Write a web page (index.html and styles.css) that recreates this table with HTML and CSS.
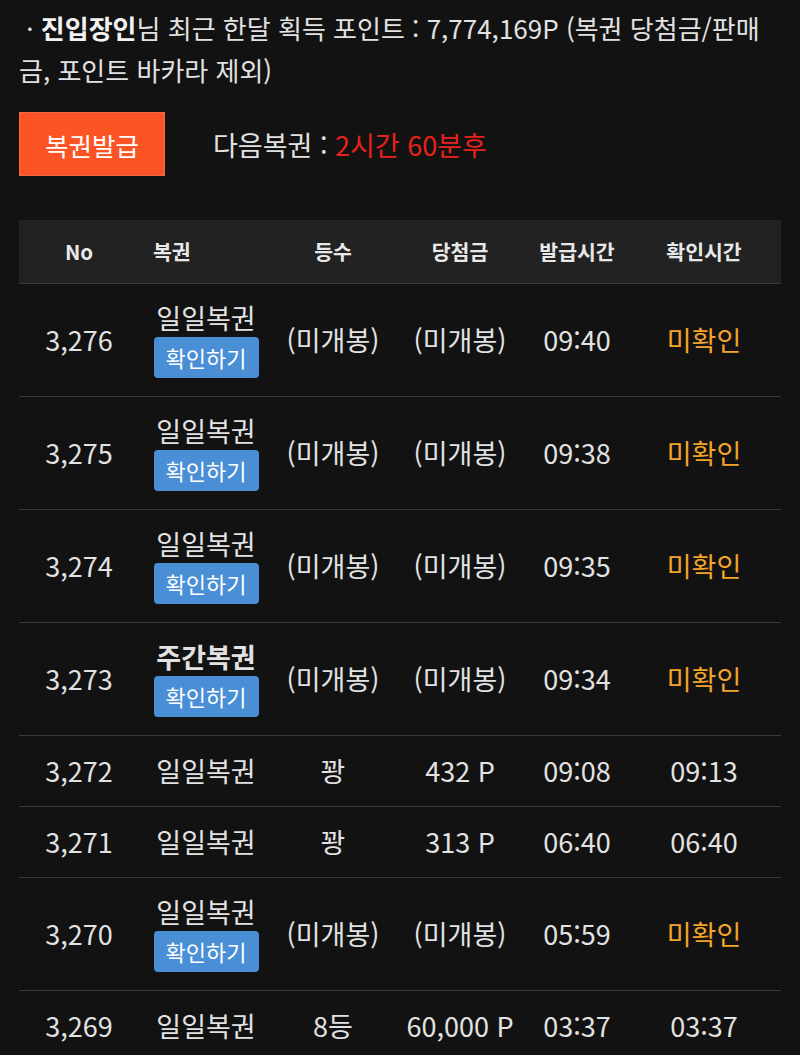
FILE: index.html
```html
<!DOCTYPE html>
<html lang="ko">
<head>
<meta charset="utf-8">
<link rel="stylesheet" href="styles.css">
</head>
<body>
<div class="page">
  <p class="info">&nbsp;· <b>진입장인</b>님 최근 한달 획득 포인트 : 7,774,169P (복권 당첨금/판매금, 포인트 바카라 제외)</p>
  <div class="issue">
    <button class="issue-btn">복권발급</button>
    <span class="next">다음복권 : <span class="red">2시간 60분후</span></span>
  </div>
  <table class="list">
    <colgroup>
      <col class="c1"><col class="c2"><col class="c3"><col class="c4"><col class="c5"><col class="c6">
    </colgroup>
    <thead>
      <tr><th>No</th><th class="left">복권</th><th>등수</th><th>당첨금</th><th>발급시간</th><th>확인시간</th></tr>
    </thead>
    <tbody>
      <tr class="tall"><td>3,276</td><td><div class="name">일일복권</div><button class="chk">확인하기</button></td><td>(미개봉)</td><td>(미개봉)</td><td>09:40</td><td class="orange">미확인</td></tr>
      <tr class="tall"><td>3,275</td><td><div class="name">일일복권</div><button class="chk">확인하기</button></td><td>(미개봉)</td><td>(미개봉)</td><td>09:38</td><td class="orange">미확인</td></tr>
      <tr class="tall"><td>3,274</td><td><div class="name">일일복권</div><button class="chk">확인하기</button></td><td>(미개봉)</td><td>(미개봉)</td><td>09:35</td><td class="orange">미확인</td></tr>
      <tr class="tall"><td>3,273</td><td><div class="name bold">주간복권</div><button class="chk">확인하기</button></td><td>(미개봉)</td><td>(미개봉)</td><td>09:34</td><td class="orange">미확인</td></tr>
      <tr><td>3,272</td><td>일일복권</td><td>꽝</td><td>432 P</td><td>09:08</td><td>09:13</td></tr>
      <tr><td>3,271</td><td>일일복권</td><td>꽝</td><td>313 P</td><td>06:40</td><td>06:40</td></tr>
      <tr class="tall"><td>3,270</td><td><div class="name">일일복권</div><button class="chk">확인하기</button></td><td>(미개봉)</td><td>(미개봉)</td><td>05:59</td><td class="orange">미확인</td></tr>
      <tr><td>3,269</td><td>일일복권</td><td>8등</td><td>60,000 P</td><td>03:37</td><td>03:37</td></tr>
    </tbody>
  </table>
</div>
</body>
</html>
```
FILE: styles.css
```css
* { box-sizing: border-box; }
html, body { margin: 0; padding: 0; background: #121212; }
body {
  font-family: "Noto Sans CJK KR", "Noto Sans", sans-serif;
  color: #e2e2e2;
}
.page { padding: 7px 19px 0; }
.info {
  margin: 0;
  font-size: 26px;
  line-height: 42px;
  word-break: break-all;
  padding-right: 4px;
}
.info b { font-weight: 700; color: #f2f2f2; }
.issue {
  display: flex;
  align-items: center;
  margin-top: 21px;
  gap: 48px;
}
.issue-btn {
  width: 146px;
  height: 64px;
  background: #fc5424;
  border: 1px solid #f06a44;
  color: #fff;
  font-family: inherit;
  font-size: 25.5px;
  padding: 0;
}
.next { font-size: 27px; color: #e2e2e2; }
.red { color: #e8221b; }
.list {
  margin-top: 44px;
  width: 762px;
  border-collapse: collapse;
  table-layout: fixed;
}
.c1 { width: 120px; }
.c2 { width: 134px; }
.c3 { width: 120px; }
.c4 { width: 134px; }
.c5 { width: 100px; }
.c6 { width: 154px; }
.list th {
  background: #222222;
  height: 63px;
  font-size: 20.5px;
  font-weight: 700;
  color: #e8e8e8;
  text-align: center;
  border-bottom: 1px solid #3a3a3a;
  padding: 0;
}
.list th.left { text-align: left; padding-left: 14px; }
.list td {
  text-align: center;
  font-size: 27px;
  height: 71px;
  border-bottom: 1px solid #3a3a3a;
  padding: 0;
  vertical-align: middle;
  line-height: 32px;
}
.list tr.tall td { height: 113px; }
.name { line-height: 32px; }
.name.bold { font-weight: 700; }
.chk {
  display: inline-block;
  width: 105px;
  height: 41px;
  margin-top: 3px;
  background: #4a8fd6;
  border: none;
  border-radius: 4px;
  color: #fff;
  font-family: inherit;
  font-size: 22px;
  padding: 0;
  vertical-align: top;
}
.orange { color: #f3a42a; }
```
